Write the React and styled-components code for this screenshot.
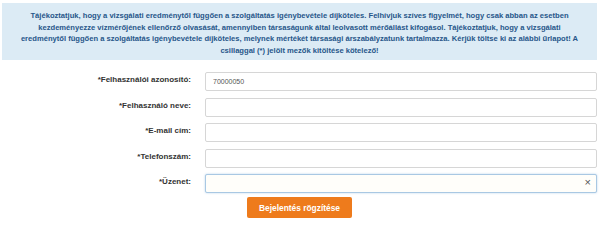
import React, { useState } from "react";
import styled, { createGlobalStyle } from "styled-components";

const GlobalStyle = createGlobalStyle`
  html, body {
    margin: 0;
    padding: 0;
    background: #ffffff;
  }
  body {
    font-family: "Liberation Sans", Arial, sans-serif;
  }
`;

const fields = [
  { name: "userId", label: "*Felhasználói azonosító:", value: "70000050" },
  { name: "userName", label: "*Felhasználó neve:", value: "" },
  { name: "email", label: "*E-mail cím:", value: "" },
  { name: "phone", label: "*Telefonszám:", value: "" },
  { name: "message", label: "*Üzenet:", value: "", focused: true },
];

const infoLines = [
  "Tájékoztatjuk, hogy a vizsgálati eredménytől függően a szolgáltatás igénybevétele díjköteles. Felhívjuk szíves figyelmét, hogy csak abban az esetben",
  "kezdeményezze vízmérőjének ellenőrző olvasását, amennyiben társaságunk által leolvasott mérőállást kifogásol. Tájékoztatjuk, hogy a vizsgálati",
  "eredménytől függően a szolgáltatás igénybevétele díjköteles, melynek mértékét társasági árszabályzatunk tartalmazza. Kérjük töltse ki az alábbi űrlapot! A",
  "csillaggal (*) jelölt mezők kitöltése kötelező!",
];

const App = () => {
  const [formData, setFormData] = useState(
    Object.fromEntries(fields.map((f) => [f.name, f.value]))
  );

  const onChange = (e) => {
    setFormData((prev) => ({ ...prev, [e.target.name]: e.target.value }));
  };

  const clear = (name) => {
    setFormData((prev) => ({ ...prev, [name]: "" }));
  };

  return (
    <>
      <GlobalStyle />
      <Page>
        <Notice>
          {infoLines.map((line, i) => (
            <NoticeLine key={i}>{line}</NoticeLine>
          ))}
        </Notice>

        <Form onSubmit={(e) => e.preventDefault()}>
          {fields.map((f) => (
            <Row key={f.name}>
              <Label htmlFor={f.name}>{f.label}</Label>
              <InputWrap>
                <Input
                  id={f.name}
                  name={f.name}
                  value={formData[f.name]}
                  onChange={onChange}
                  $focused={f.focused}
                />
                {f.focused && (
                  <ClearButton type="button" onClick={() => clear(f.name)}>
                    ×
                  </ClearButton>
                )}
              </InputWrap>
            </Row>
          ))}

          <Actions>
            <Submit type="submit">Bejelentés rögzítése</Submit>
          </Actions>
        </Form>
      </Page>
    </>
  );
};

const Page = styled.div`
  width: 600px;
  padding: 3px 3px 0 2px;
  box-sizing: border-box;
`;

const Notice = styled.div`
  background: #dcebf5;
  height: 57px;
  box-sizing: border-box;
  padding: 7px 1px 0;
  text-align: center;
  color: #27578a;
  font-weight: bold;
  font-size: 7.6px;
  line-height: 11.5px;
`;

const NoticeLine = styled.div`
  white-space: nowrap;
`;

const Form = styled.form`
  margin-top: 10px;
  display: flex;
  flex-direction: column;
  gap: 6.5px;
`;

const Row = styled.div`
  display: grid;
  grid-template-columns: 189px 1fr;
  column-gap: 14px;
  align-items: center;
  height: 19px;
`;

const Label = styled.label`
  text-align: right;
  font-size: 8px;
  font-weight: bold;
  color: #333333;
`;

const InputWrap = styled.div`
  position: relative;
  height: 100%;
`;

const Input = styled.input`
  width: 100%;
  height: 100%;
  box-sizing: border-box;
  border: 1px solid ${(p) => (p.$focused ? "#a9c8e3" : "#d6d6d6")};
  border-radius: 2px;
  background: ${(p) => (p.$focused ? "#fffefa" : "#ffffff")};
  box-shadow: ${(p) =>
    p.$focused ? "0 0 2px rgba(102, 160, 215, 0.5)" : "none"};
  padding: 0 7px;
  font-family: "Liberation Sans", Arial, sans-serif;
  font-size: 7px;
  color: #555555;
  outline: none;
`;

const ClearButton = styled.button`
  position: absolute;
  right: 6px;
  top: 50%;
  transform: translateY(-50%);
  border: 0;
  background: none;
  padding: 0;
  font-family: "Liberation Sans", Arial, sans-serif;
  font-size: 11px;
  line-height: 1;
  color: #555555;
  cursor: pointer;
`;

const Actions = styled.div`
  padding-left: 245px;
  margin-top: -1px;
`;

const Submit = styled.button`
  width: 105px;
  height: 21px;
  border: 0;
  border-radius: 2px;
  background: #ee7b1c;
  color: #ffffff;
  font-family: "Liberation Sans", Arial, sans-serif;
  font-weight: bold;
  font-size: 8.4px;
  cursor: pointer;
  padding: 0;
`;

export default App;
